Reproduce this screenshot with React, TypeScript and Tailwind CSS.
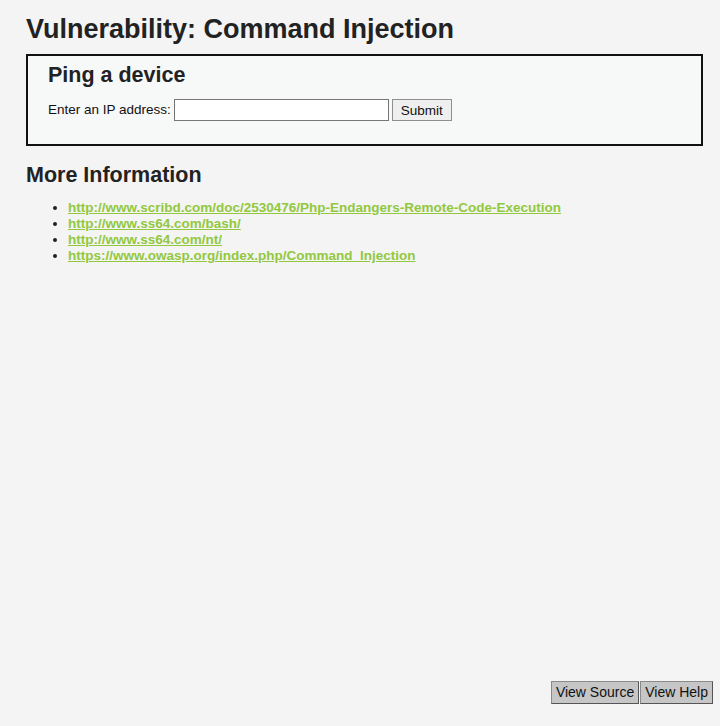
export default function App() {
  const links = [
    "http://www.scribd.com/doc/2530476/Php-Endangers-Remote-Code-Execution",
    "http://www.ss64.com/bash/",
    "http://www.ss64.com/nt/",
    "https://www.owasp.org/index.php/Command_Injection",
  ];
  return (
    <div
      className="w-[720px] h-[726px] bg-[#f4f4f4] text-[#222] flex flex-col"
      style={{ fontFamily: '"Liberation Sans", Arial, sans-serif' }}
    >
      <div className="flex-1 pl-[26px] pr-[17px] pt-[14px]">
        <h1 className="text-[27px] font-bold leading-[30px] text-[#222]">
          Vulnerability: Command Injection
        </h1>
        <div className="mt-[10px] border-2 border-[#111] bg-[#f7f8f8] pl-[20px] pt-[6px] h-[92px]">
          <h2 className="text-[21.5px] font-bold leading-[26px] text-[#222]">Ping a device</h2>
          <div className="mt-[11px] flex items-center text-[13.5px] text-[#111]">
            <span>Enter an IP address:</span>
            <input
              type="text"
              className="ml-[3px] w-[215px] h-[22px] border border-[#767676] bg-white"
            />
            <button className="ml-[3px] h-[22px] px-[8px] border border-[#8f8f8f] bg-[#efefef] text-[13.5px] leading-[19px] text-[#111]">
              Submit
            </button>
          </div>
        </div>
        <h2 className="mt-[16px] text-[21.5px] font-bold leading-[26px] text-[#222]">More Information</h2>
        <ul className="mt-[12px] pl-[42px] list-disc text-[13.5px] leading-[16px]">
          {links.map((l) => (
            <li key={l}>
              <a href="#" className="font-bold underline text-[#92c83e]">
                {l}
              </a>
            </li>
          ))}
        </ul>
      </div>
      <div className="flex justify-end pr-[7px] pb-[22px]">
        <button className="h-[23px] px-[4px] bg-[#c6c6c6] border border-[#8a8a8a] border-b-[#555] border-r-[#555] text-[14px] text-[#111]">
          View Source
        </button>
        <button className="ml-[1px] h-[23px] px-[4px] bg-[#c6c6c6] border border-[#8a8a8a] border-b-[#555] border-r-[#555] text-[14px] text-[#111]">
          View Help
        </button>
      </div>
    </div>
  );
}
